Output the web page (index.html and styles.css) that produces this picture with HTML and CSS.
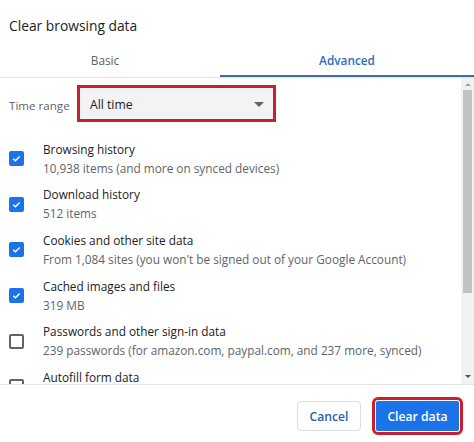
FILE: index.html
```html
<!DOCTYPE html>
<html lang="en">
<head>
  <meta charset="UTF-8">
  <meta name="viewport" content="width=device-width, initial-scale=1.0">
  <title>Clear browsing data</title>
  <link rel="stylesheet" href="styles.css">
</head>
<body>
  <div class="dialog">
    <h1 class="title">Clear browsing data</h1>

    <!-- tabs -->
    <div class="tabs">
      <div class="tab">Basic</div>
      <div class="tab active">Advanced</div>
    </div>

    <div class="body">
      <div class="content">
        <div class="time-range">
          <span class="label">Time range</span>
          <div class="select">
            <span>All time</span>
            <span class="caret"></span>
          </div>
        </div>

        <div class="item">
          <span class="checkbox checked"></span>
          <div class="text">
            <div class="primary">Browsing history</div>
            <div class="secondary">10,938 items (and more on synced devices)</div>
          </div>
        </div>
        <div class="item">
          <span class="checkbox checked"></span>
          <div class="text">
            <div class="primary">Download history</div>
            <div class="secondary">512 items</div>
          </div>
        </div>
        <div class="item">
          <span class="checkbox checked"></span>
          <div class="text">
            <div class="primary">Cookies and other site data</div>
            <div class="secondary">From 1,084 sites (you won't be signed out of your Google Account)</div>
          </div>
        </div>
        <div class="item">
          <span class="checkbox checked"></span>
          <div class="text">
            <div class="primary">Cached images and files</div>
            <div class="secondary">319 MB</div>
          </div>
        </div>
        <div class="item">
          <span class="checkbox"></span>
          <div class="text">
            <div class="primary">Passwords and other sign-in data</div>
            <div class="secondary">239 passwords (for amazon.com, paypal.com, and 237 more, synced)</div>
          </div>
        </div>
        <div class="item">
          <span class="checkbox"></span>
          <div class="text">
            <div class="primary">Autofill form data</div>
            <div class="secondary">&nbsp;</div>
          </div>
        </div>
      </div>

      <!-- scrollbar -->
      <div class="scrollbar">
        <span class="arrow up"></span>
        <span class="thumb"></span>
        <span class="spacer"></span>
        <span class="arrow down"></span>
      </div>
    </div>

    <div class="footer">
      <button class="btn cancel">Cancel</button>
      <button class="btn primary-btn">Clear data</button>
    </div>
  </div>
</body>
</html>
```

FILE: styles.css
```css
body {
  margin: 0;
  background: #fff;
  font-family: 'Open Sans', 'Noto Sans', sans-serif;
  color: #202124;
}
.dialog {
  width: 474px;
  height: 442px;
  overflow: hidden;
}
.title {
  margin: 0;
  padding: 15px 0 0 9px;
  height: 21px;
  line-height: 21px;
  font-size: 13.8px;
  font-weight: 400;
}
.tabs {
  display: flex;
  border-bottom: 1px solid #e3e3e3;
}
.tab {
  padding: 14px 0 5px;
  line-height: 20px;
  font-size: 11.8px;
  text-align: center;
  color: #5f6368;
  border-bottom: 2px solid transparent;
}
.tab:first-child {
  width: 210px;
  padding-right: 10px;
}
.tab.active {
  flex: 1;
  color: #2b6cc4;
  font-weight: 600;
  border-bottom-color: #3f6ea8;
}
.body {
  display: flex;
  height: 306px;
}
.content {
  flex: 1;
  overflow: hidden;
}
.time-range {
  display: flex;
  align-items: center;
  padding: 10px 0 0 9px;
}
.label {
  width: 71px;
  padding-top: 3px;
  font-size: 11.6px;
  color: #5f6368;
}
.select {
  width: 193px;
  height: 31px;
  box-sizing: border-box;
  padding: 2px 10px 0;
  display: flex;
  align-items: center;
  justify-content: space-between;
  background: #f1f3f4;
  font-size: 12.2px;
  outline: 3px solid #c8202e;
}
.caret {
  width: 0;
  height: 0;
  border-left: 5px solid transparent;
  border-right: 5px solid transparent;
  border-top: 5px solid #5f6368;
  margin-right: -1px;
}
.time-range + .item {
  margin-top: 17px;
}
.item {
  display: flex;
  align-items: center;
  padding: 3.8px 0 3.8px 9px;
}
.checkbox {
  width: 15px;
  height: 15px;
  box-sizing: border-box;
  border: 2px solid #5f6368;
  border-radius: 2px;
  margin-right: 19px;
  flex-shrink: 0;
}
.checkbox.checked {
  border-color: #1a73e8;
  background: #1a73e8 url("data:image/svg+xml,%3Csvg xmlns='http://www.w3.org/2000/svg' viewBox='0 0 12 12'%3E%3Cpath d='M2.5 6.2l2.3 2.3 4.7-4.8' fill='none' stroke='white' stroke-width='1.6'/%3E%3C/svg%3E") center / 11px 11px no-repeat;
}
.primary, .secondary {
  line-height: 19px;
  font-size: 11.8px;
  white-space: nowrap;
}
.secondary {
  color: #5f6368;
}
.scrollbar {
  width: 13px;
  display: flex;
  flex-direction: column;
  align-items: center;
  background: #f1f1f1;
}
.arrow {
  width: 0;
  height: 0;
  border-left: 3px solid transparent;
  border-right: 3px solid transparent;
}
.arrow.up {
  margin-top: 5px;
  border-bottom: 3px solid #a3a3a3;
}
.arrow.down {
  margin-bottom: 6px;
  border-top: 3px solid #505050;
}
.thumb {
  margin-top: 4px;
  width: 9px;
  height: 203px;
  background: #c1c1c1;
}
.spacer {
  flex: 1;
}
.footer {
  display: flex;
  justify-content: flex-end;
  gap: 15px;
  padding: 16px 15px 0 0;
  border-top: 1px solid #e3e3e3;
}
.btn {
  height: 30px;
  padding: 0;
  font-family: inherit;
  font-size: 12.2px;
  font-weight: 600;
  border-radius: 4px;
}
.cancel {
  width: 64px;
  background: #fff;
  color: #2a62a8;
  border: 1px solid #dadce0;
}
.primary-btn {
  width: 83px;
  background: #1a73e8;
  color: #fff;
  border: none;
  border-radius: 2px;
  outline: 3px solid #c8202e;
  outline-offset: 1px;
}
```
